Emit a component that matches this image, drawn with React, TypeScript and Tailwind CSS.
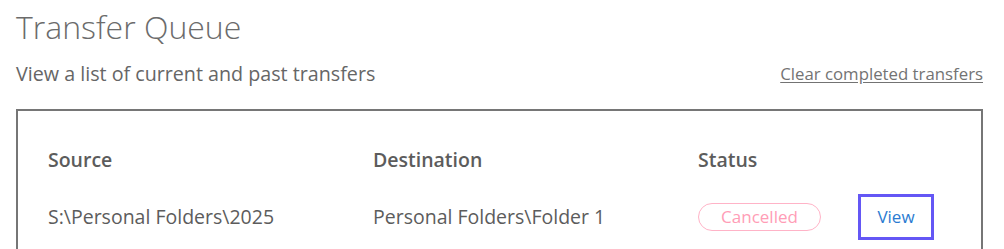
export default function App() {
  const font = { fontFamily: '"Open Sans", "Noto Sans", sans-serif' };
  return (
    <div className="min-h-screen bg-white pl-4 pr-[21px] pt-[3px] text-[#666666]" style={font}>
      <h1 className="text-[32px] font-light leading-[48px] text-[#6b6b6b]">Transfer Queue</h1>
      <div className="mt-[8px] flex items-end justify-between">
        <p className="text-[19.7px] leading-[30px] text-[#666666]">View a list of current and past transfers</p>
        <a href="#" className="text-[16.8px] leading-[30px] text-[#737373] underline underline-offset-2">
          Clear completed transfers
        </a>
      </div>
      <div className="mt-[20px] border-2 border-[#767676] pl-[30px] pr-[30px] pt-[35px] pb-6">
        <div className="grid grid-cols-[325px_325px_160px_1fr] items-center">
          <div className="text-[19.5px] font-semibold leading-[28px] text-[#5c5c5c]">Source</div>
          <div className="text-[19.5px] font-semibold leading-[28px] text-[#5c5c5c]">Destination</div>
          <div className="text-[19.5px] font-semibold leading-[28px] text-[#5c5c5c]">Status</div>
          <div />
          <div className="mt-[20px] text-[19.5px] leading-[28px] text-[#5c5c5c]">S:\Personal Folders\2025</div>
          <div className="mt-[20px] text-[19.5px] leading-[28px] text-[#5c5c5c]">Personal Folders\Folder 1</div>
          <div className="mt-[20px]">
            <span className="inline-flex h-[28px] w-[123px] items-center justify-center rounded-full border-[1.5px] border-[#ffb3c7] text-[17px] text-[#ff9db6]">
              Cancelled
            </span>
          </div>
          <div className="mt-[20px]">
            <button className="h-[46px] w-[76px] border-[3px] border-[#6457f5] text-[17px] text-[#2a7bd1]">
              View
            </button>
          </div>
        </div>
      </div>
    </div>
  );
}
